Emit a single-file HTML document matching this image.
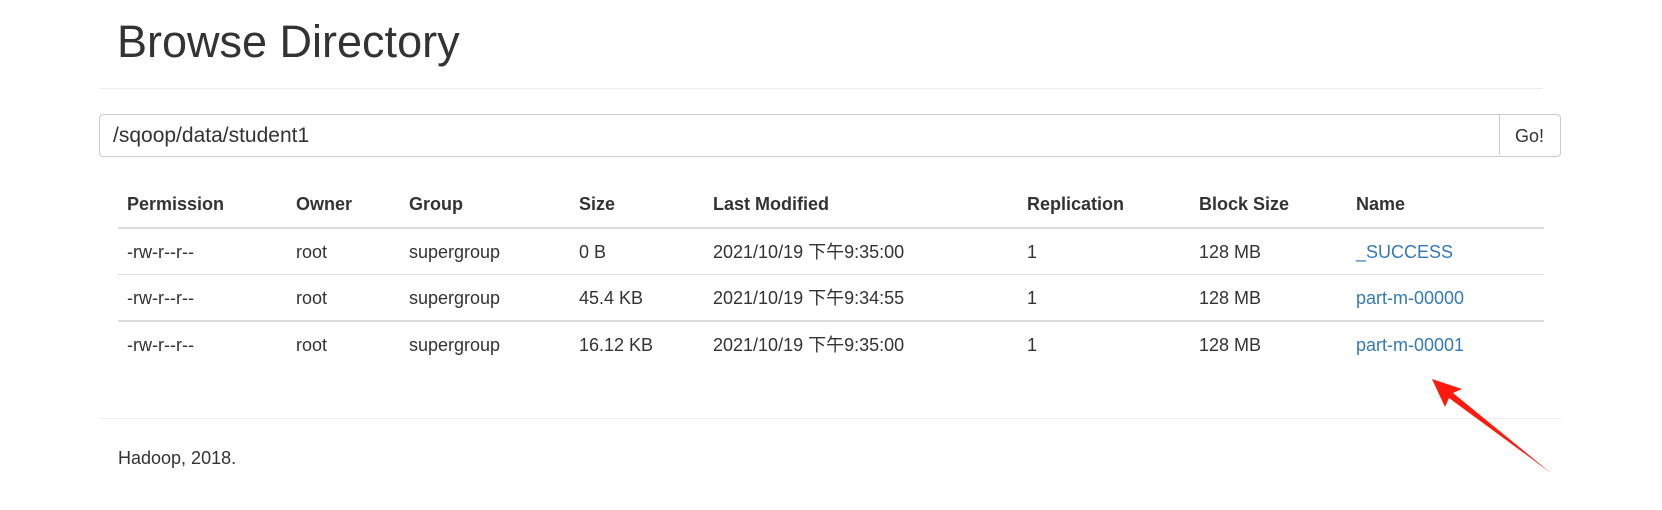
<!DOCTYPE html>
<html><head><meta charset="utf-8"><style>
html,body{margin:0;padding:0;background:#fff;width:1662px;height:510px;overflow:hidden;position:relative;font-family:"Liberation Sans","Noto Sans CJK SC",sans-serif;color:#333;}
.a{position:absolute;white-space:nowrap;}
h1{position:absolute;left:117px;top:14px;margin:0;font-size:45px;font-weight:normal;line-height:56px;color:#333;}
.hr{position:absolute;height:1px;background:#eee;}
.inp{position:absolute;left:99px;top:114px;width:1460px;height:41px;border:1px solid #ccc;border-radius:4px;box-sizing:content-box;}
.go{position:absolute;left:1499px;top:114px;width:61px;height:41px;border-left:1px solid #ccc;}
.t{font-size:18px;line-height:20px;}
.b{font-weight:bold;}
.l{color:#337ab7;}
</style></head><body>
<h1>Browse Directory</h1>
<div class="hr" style="left:100px;top:88px;width:1442px"></div>
<div class="inp"></div>
<div class="go"></div>
<div class="a t" style="left:113px;top:126px;font-size:21px">/sqoop/data/student1</div>
<div class="a t" style="left:1515px;top:126px">Go!</div>

<div class="a t b" style="left:127px;top:194px">Permission</div>
<div class="a t b" style="left:296px;top:194px">Owner</div>
<div class="a t b" style="left:409px;top:194px">Group</div>
<div class="a t b" style="left:579px;top:194px">Size</div>
<div class="a t b" style="left:713px;top:194px">Last Modified</div>
<div class="a t b" style="left:1027px;top:194px">Replication</div>
<div class="a t b" style="left:1199px;top:194px">Block Size</div>
<div class="a t b" style="left:1356px;top:194px">Name</div>
<div class="hr" style="left:118px;top:227px;width:1426px;height:2px;background:#ddd"></div>

<div class="a t" style="left:127px;top:242px">-rw-r--r--</div>
<div class="a t" style="left:296px;top:242px">root</div>
<div class="a t" style="left:409px;top:242px">supergroup</div>
<div class="a t" style="left:579px;top:242px">0 B</div>
<div class="a t" style="left:713px;top:242px">2021/10/19 下午9:35:00</div>
<div class="a t" style="left:1027px;top:242px">1</div>
<div class="a t" style="left:1199px;top:242px">128 MB</div>
<div class="a t l" style="left:1356px;top:242px">_SUCCESS</div>
<div class="hr" style="left:118px;top:274px;width:1426px;background:#ddd"></div>

<div class="a t" style="left:127px;top:288px">-rw-r--r--</div>
<div class="a t" style="left:296px;top:288px">root</div>
<div class="a t" style="left:409px;top:288px">supergroup</div>
<div class="a t" style="left:579px;top:288px">45.4 KB</div>
<div class="a t" style="left:713px;top:288px">2021/10/19 下午9:34:55</div>
<div class="a t" style="left:1027px;top:288px">1</div>
<div class="a t" style="left:1199px;top:288px">128 MB</div>
<div class="a t l" style="left:1356px;top:288px">part-m-00000</div>
<div class="hr" style="left:118px;top:320px;width:1426px;height:2px;background:#ddd"></div>

<div class="a t" style="left:127px;top:335px">-rw-r--r--</div>
<div class="a t" style="left:296px;top:335px">root</div>
<div class="a t" style="left:409px;top:335px">supergroup</div>
<div class="a t" style="left:579px;top:335px">16.12 KB</div>
<div class="a t" style="left:713px;top:335px">2021/10/19 下午9:35:00</div>
<div class="a t" style="left:1027px;top:335px">1</div>
<div class="a t" style="left:1199px;top:335px">128 MB</div>
<div class="a t l" style="left:1356px;top:335px">part-m-00001</div>

<div class="hr" style="left:99px;top:418px;width:1462px"></div>
<div class="a t" style="left:118px;top:448px">Hadoop, 2018.</div>

<svg class="a" style="left:0;top:0" width="1662" height="510">
<polygon points="1432,379 1462,389 1453,393 1551,473 1449,398 1445,407" fill="#ff1a0e"/>
</svg>
</body></html>
